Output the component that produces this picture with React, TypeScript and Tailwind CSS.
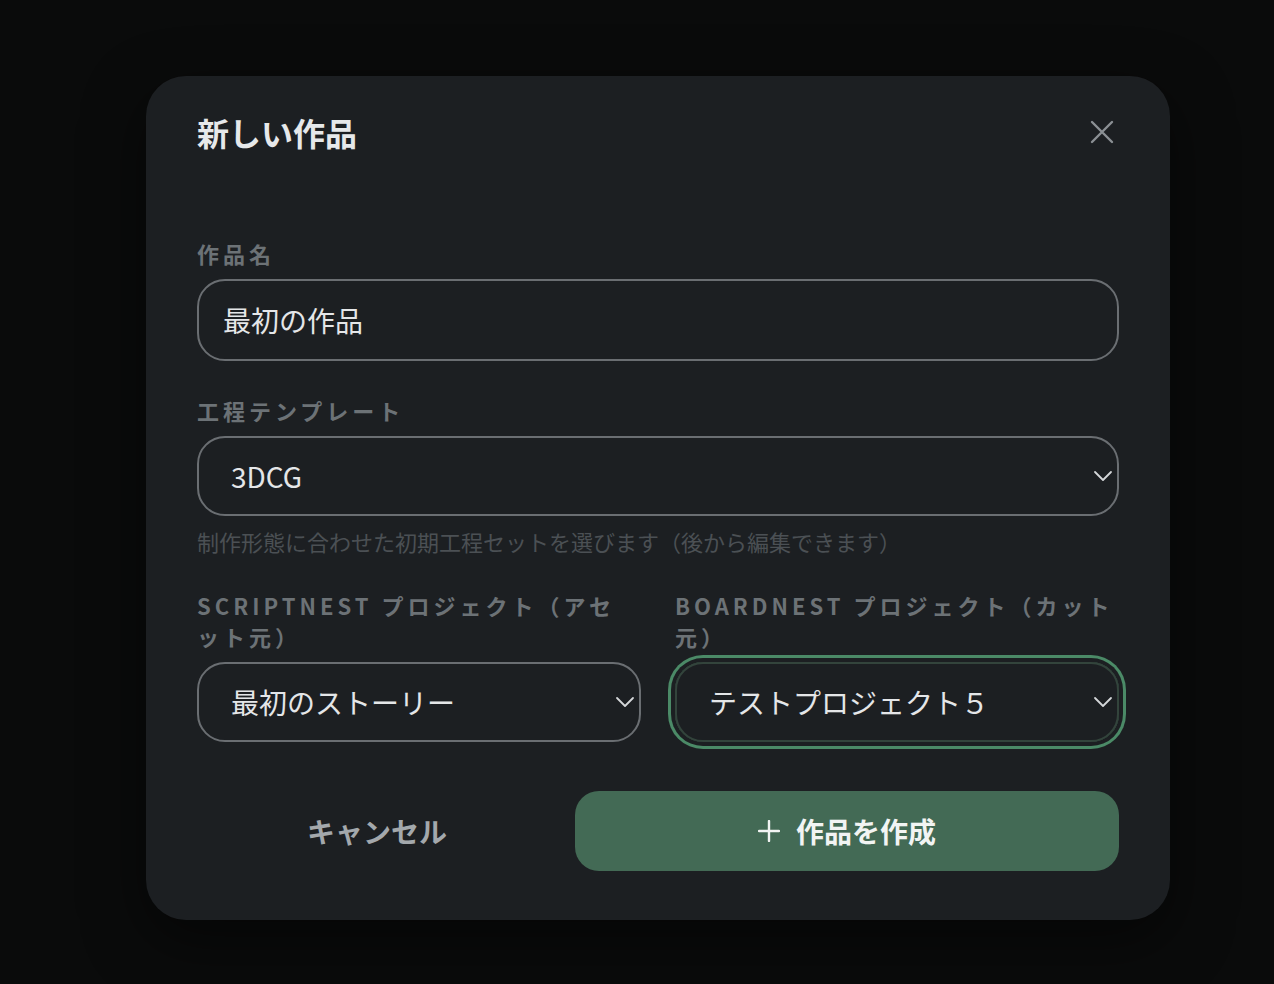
import React from 'react';

const font = { fontFamily: '"Noto Sans CJK JP", "Noto Sans", sans-serif' };

const Chevron = () => (
  <svg width="20" height="12" viewBox="0 0 20 12" fill="none" className="shrink-0">
    <path d="M2 2l8 8 8-8" stroke="#d4d7d9" strokeWidth="1.8" strokeLinecap="round" strokeLinejoin="round" />
  </svg>
);

const Select = ({ value, focused }: { value: string; focused?: boolean }) => (
  <div
    className={
      'h-[80px] rounded-[28px] border-2 flex items-center justify-between pl-[32px] pr-[4px] ' +
      (focused
        ? 'border-[#33443c] ring-[3px] ring-[#4b8a67] ring-offset-[4px] ring-offset-[#1c1f22]'
        : 'border-[#6a6e72]')
    }
  >
    <span className="text-[28px] text-[#e4e6e8] leading-none">{value}</span>
    <Chevron />
  </div>
);

const Label = ({ children, className = '' }: { children: React.ReactNode; className?: string }) => (
  <div className={'text-[22px] font-bold text-[#6c7276] tracking-[4px] leading-[31px] mb-[10px] ' + className}>
    {children}
  </div>
);

export default function App() {
  return (
    <div className="min-h-screen bg-[#0a0b0b] flex pl-[146px] pt-[76px]" style={font}>
      <div className="w-[1024px] h-[844px] bg-[#1c1f22] rounded-[40px] px-[51px] pt-[38px] pb-[50px] shadow-[0_20px_60px_rgba(0,0,0,0.5)]">
        <div className="flex items-center justify-between h-[36px]">
          <h1 className="text-[32px] font-bold text-[#e6e8ea] leading-none">新しい作品</h1>
          <svg width="24" height="24" viewBox="0 0 24 24" fill="none" className="mr-[5px]">
            <path d="M2 2l20 20M22 2L2 22" stroke="#8b9094" strokeWidth="2.4" strokeLinecap="round" />
          </svg>
        </div>

        <div className="mt-[88px]">
          <Label>作品名</Label>
          <div className="h-[82px] rounded-[28px] border-2 border-[#6a6e72] flex items-center px-[24px]">
            <span className="text-[28px] text-[#e4e6e8] leading-none">最初の作品</span>
          </div>
        </div>

        <div className="mt-[34px]">
          <Label>工程テンプレート</Label>
          <Select value="3DCG" />
          <p className="mt-[10px] text-[22px] leading-[30px] text-[#4b5054] whitespace-nowrap">
            制作形態に合わせた初期工程セットを選びます（後から編集できます）
          </p>
        </div>

        <div className="mt-[34px] grid grid-cols-2 gap-x-[34px]">
          <div>
            <Label className="max-w-[425px]">SCRIPTNEST プロジェクト（アセット元）</Label>
            <Select value="最初のストーリー" />
          </div>
          <div>
            <Label>BOARDNEST プロジェクト（カット元）</Label>
            <Select value="テストプロジェクト５" focused />
          </div>
        </div>

        <div className="mt-[49px] flex gap-[18px]">
          <button className="w-[360px] h-[80px] rounded-[24px] text-[28px] font-bold text-[#a3a8ac]">キャンセル</button>
          <button className="flex-1 h-[80px] rounded-[24px] bg-[#436a55] flex items-center justify-center gap-[16px] text-[28px] font-bold text-[#f2f4f3]">
            <svg width="22" height="22" viewBox="0 0 22 22" fill="none">
              <path d="M11 1v20M1 11h20" stroke="#f2f4f3" strokeWidth="2.4" strokeLinecap="round" />
            </svg>
            <span>作品を作成</span>
          </button>
        </div>
      </div>
    </div>
  );
}
